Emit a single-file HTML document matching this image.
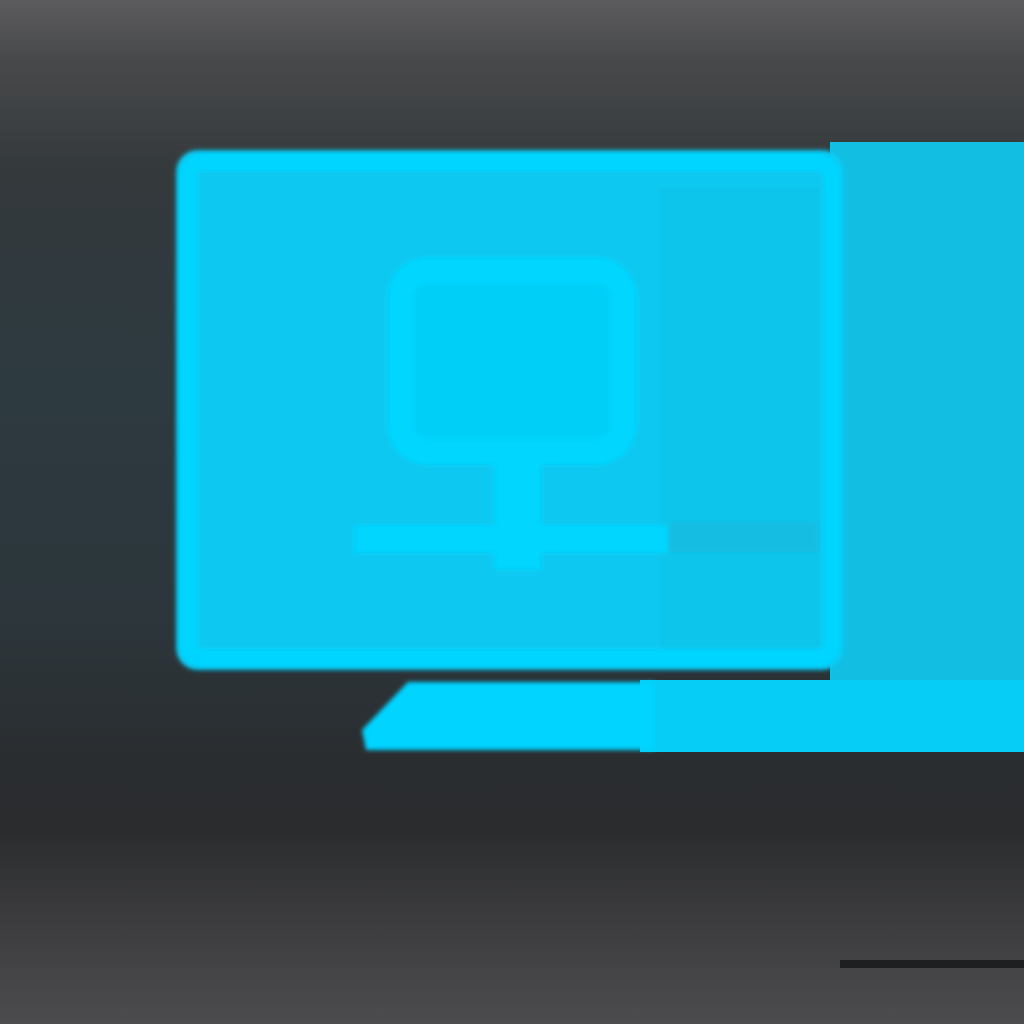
<!DOCTYPE html>
<html><head><style>
html,body{margin:0;padding:0;width:1024px;height:1024px;overflow:hidden}
body{background:linear-gradient(#5c5c5e 0px,#48494b 60px,#34393c 170px,#2d3a40 380px,#2c363b 620px,#2a2d30 760px,#2b2c2e 830px,#3e3e40 930px,#4c4c4e 1024px)}
</style></head><body>
<svg width="1024" height="1024" style="position:absolute;left:0;top:0">
<defs><filter id="b"><feGaussianBlur stdDeviation="2"/></filter></defs>
<rect x="830" y="142" width="194" height="540" fill="#12bfe3"/>
<rect x="640" y="680" width="384" height="72" fill="#05cdf6"/>
<g filter="url(#b)">
<polygon points="408,682 655,682 655,750 366,750 362,730" fill="#00d4ff"/>
<rect x="176" y="150" width="668" height="520" rx="22" fill="#08c8f0"/>
<rect x="188" y="162" width="644" height="496" rx="14" fill="none" stroke="#00d5ff" stroke-width="18"/>
<rect x="660" y="188" width="160" height="460" fill="#0fc3e8" opacity="0.7"/>
<rect x="400" y="270" width="224" height="182" rx="28" fill="#05d0f8" stroke="#00d6ff" stroke-width="26"/>
<rect x="494" y="460" width="48" height="110" fill="#00d6ff"/>
<rect x="354" y="525" width="315" height="28" fill="#00d6ff"/>
<rect x="668" y="522" width="150" height="30" fill="#12bde2"/>
</g>
<rect x="840" y="960" width="184" height="8" fill="#1e1f20"/>
</svg>
</body></html>
